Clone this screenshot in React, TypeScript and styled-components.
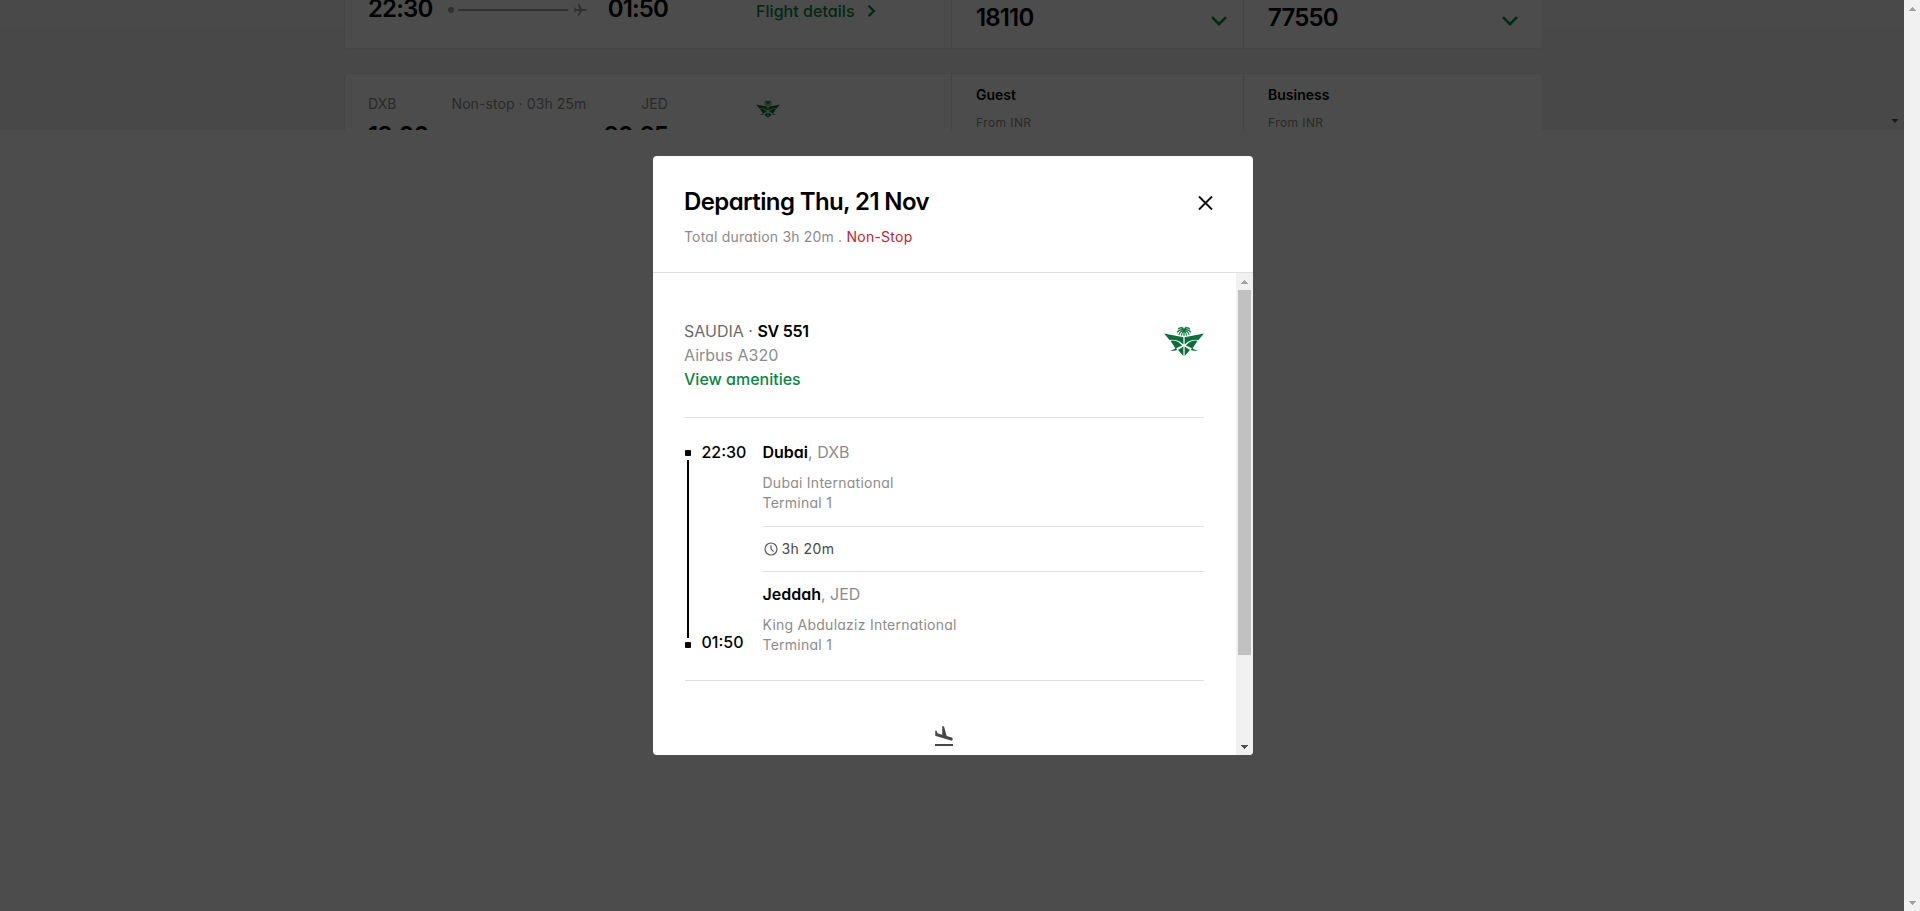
import React from "react";
import styled, { createGlobalStyle } from "styled-components";

const GlobalStyle = createGlobalStyle`
  * { box-sizing: border-box; }
  body {
    margin: 0;
    overflow: hidden;
    font-family: Inter, "Liberation Sans", sans-serif;
    font-feature-settings: "cv11";
    color: #000;
  }
`;

const Screen = styled.div`
  display: flex;
  width: 1920px;
  height: 911px;
  background: #fff;
`;

const Viewport = styled.main`
  position: relative;
  flex: 1;
`;

const Results = styled.section`
  position: relative;
  height: 130px;
  padding: 0 361px 0 344px;
  overflow: hidden;
  background: linear-gradient(#f4f4f4 0 28px, #f0f0f0 28px);
`;

const FlightCard = styled.article<{ $continued?: boolean }>`
  display: flex;
  height: ${(p) => (p.$continued ? 49 : 140)}px;
  margin-bottom: 24px;
  border: 1px solid #e6e6e6;
  border-top-width: ${(p) => (p.$continued ? 0 : 1)}px;
  border-radius: ${(p) => (p.$continued ? "0 0 4px 4px" : "4px")};
  background: #fff;
`;

const Journey = styled.div`
  display: flex;
  align-items: flex-start;
  gap: 88px;
  width: 606px;
  padding-left: 23px;
`;

const Trip = styled.div<{ $top: number }>`
  width: 300px;
  margin-top: ${(p) => p.$top}px;
`;

const Spread = styled.div<{ $top?: number }>`
  display: flex;
  justify-content: space-between;
  align-items: center;
  margin-top: ${(p) => p.$top ?? 0}px;
`;

const BigFigure = styled.span`
  font-size: 24px;
  line-height: 30px;
  font-weight: 600;
  letter-spacing: -0.85px;
`;

const Caption = styled.span`
  font-size: 14px;
  line-height: 20px;
  letter-spacing: 0.08px;
  color: #8c8c8c;
`;

const Route = styled.svg`
  display: block;
  margin-left: -4px;
`;

const CarrierSlot = styled.div`
  padding-top: 26px;
`;

const DetailsLink = styled.a`
  display: flex;
  align-items: center;
  gap: 12px;
  margin-top: -1px;
  font-size: 16px;
  line-height: 24px;
  font-weight: 500;
  letter-spacing: 0.05px;
  color: #078643;
`;

const Fare = styled.div<{ $width: number; $end: number }>`
  width: ${(p) => p.$width}px;
  padding: 0 ${(p) => p.$end}px 0 24px;
  border-left: 1px solid #e6e6e6;
`;

const FarePrice = styled.div`
  display: flex;
  justify-content: space-between;
  align-items: flex-start;
  padding-top: 3px;
  svg { margin-top: 13px; }
`;

const FareName = styled.div`
  padding-top: 11px;
  font-size: 14px;
  line-height: 20px;
  font-weight: 600;
`;

const FareNote = styled.div`
  margin-top: 10px;
  font-size: 12px;
  line-height: 16px;
  letter-spacing: 0.42px;
  color: #8c8c8c;
`;

const ListArrow = styled.svg`
  position: absolute;
  right: 5px;
  top: 119px;
`;

const Backdrop = styled.div`
  position: absolute;
  inset: 0;
  display: flex;
  align-items: center;
  justify-content: center;
  background: rgba(0, 0, 0, 0.7);
`;

const Dialog = styled.div`
  display: flex;
  flex-direction: column;
  width: 600px;
  height: 599px;
  margin-left: 1px;
  border-radius: 4px;
  overflow: hidden;
  background: #fff;
`;

const DialogHeader = styled.header`
  display: flex;
  justify-content: space-between;
  height: 117px;
  padding: 30px 39px 0 31.5px;
  border-bottom: 1px solid #dfdfdf;
  svg { margin-top: 9px; }
`;

const Title = styled.h1`
  margin: 0;
  font-size: 24px;
  line-height: 32px;
  font-weight: 600;
  letter-spacing: -0.62px;
`;

const Duration = styled.p`
  margin: 9px 0 0;
  font-size: 14px;
  line-height: 20px;
  letter-spacing: 0.18px;
  color: #8c8c8c;
`;

const Stops = styled.span`
  letter-spacing: 0.25px;
  color: #c3242c;
`;

const DialogBody = styled.div`
  display: flex;
  flex: 1;
  min-height: 0;
`;

const Content = styled.div`
  flex: 1;
  padding: 46px 32px 0;
`;

const Aircraft = styled.div`
  display: flex;
  justify-content: space-between;
  height: 99px;
  border-bottom: 1px solid #e0e0e0;
  svg { margin-top: 7px; }
`;

const Details = styled.div`
  margin-left: -0.5px;
`;

const Line = styled.div<{ $color: string; $weight?: number }>`
  font-size: 16px;
  line-height: 24px;
  color: ${(p) => p.$color};
  font-weight: ${(p) => p.$weight ?? 400};
`;

const Strong = styled.span<{ $spacing?: number }>`
  color: #000;
  font-weight: 600;
  letter-spacing: ${(p) => p.$spacing ?? 0}px;
`;

const Itinerary = styled.div`
  display: flex;
  height: 263px;
  padding-top: 22px;
  border-bottom: 1px solid #e0e0e0;
`;

const Rail = styled.div`
  display: flex;
  flex-direction: column;
  align-items: center;
  width: 6px;
  height: 208px;
  padding-top: 10px;
`;

const Stop = styled.i`
  width: 6px;
  height: 6px;
  border-radius: 1px;
  background: #000;
`;

const Track = styled.i`
  flex: 1;
  width: 2px;
  margin: 4px 0;
  background: #000;
`;

const Times = styled.div`
  display: flex;
  flex-direction: column;
  justify-content: space-between;
  width: 72px;
  height: 214px;
  padding-left: 11px;
  font-size: 16px;
  line-height: 24px;
  font-weight: 500;
`;

const Places = styled.div`
  flex: 1;
`;

const Airport = styled.div<{ $top?: number }>`
  margin-top: ${(p) => p.$top ?? 0}px;
  font-size: 14px;
  line-height: 20px;
  letter-spacing: 0.25px;
  color: #8c8c8c;
`;

const Elapsed = styled.div`
  display: flex;
  align-items: center;
  gap: 4px;
  height: 46px;
  margin: 13px 0 10px;
  padding: 0 0 2px 1px;
  border: solid #e0e0e0;
  border-width: 1px 0;
  font-size: 14px;
  letter-spacing: 0.4px;
  color: #484848;
  svg { margin-top: 2px; }
`;

const Arrival = styled.div`
  display: flex;
  justify-content: center;
  padding-top: 45px;
`;

const Scrollbar = styled.div`
  display: flex;
  flex-direction: column;
  align-items: center;
  justify-content: space-between;
  width: 17px;
  background: #f1f1f1;
`;

const Thumb = styled.div`
  width: 13px;
  height: 365px;
  margin-bottom: auto;
  background: #c1c1c1;
`;

const ArrowButton = styled.div`
  display: flex;
  align-items: center;
  justify-content: center;
  width: 17px;
  height: 17px;
`;

const ArrowShape = ({ up, color }: { up?: boolean; color: string }) => (
  <svg width="7" height="4" viewBox="0 0 7 4" shapeRendering="crispEdges">
    <path fill={color} d={up ? "M3 0h1v1h1v1h1v1h1v1H0V3h1V2h1V1h1z" : "M0 0h7v1H6v1H5v1H4v1H3V3H2V2H1V1H0z"} />
  </svg>
);

const Emblem = ({ width, height }: { width: number; height: number }) => (
  <svg width={width} height={height} viewBox="0 0 40 30" preserveAspectRatio="none">
    <g fill="#0a6f3b">
      <path d="M0 7.4 19.4 11.2V18.6L15.6 15.6Q11.5 13 5.6 14Z" />
      <path d="M40 7.4 20.6 11.2V18.6L24.4 15.6Q28.5 13 34.4 14Z" />
      <path d="M6.4 14.8Q11.6 14 15 16.6L18.2 19.4 11.6 22.6Z" />
      <path d="M33.6 14.8Q28.4 14 25 16.6L21.8 19.4 28.4 22.6Z" />
      <path d="M19.4 20.4V30L14 24Z" />
      <path d="M20.6 20.4V30L26 24Z" />
      <path d="M6.2 25 9.6 23.6 11.6 22 13.2 23.2 12 24.6Z" />
      <path d="M33.8 25 30.4 23.6 28.4 22 26.8 23.2 28 24.6Z" />
    </g>
    <path
      fill="none"
      stroke="#0a6f3b"
      strokeWidth="1.15"
      d="M20 10V3.5M20 4Q17 .2 14.2 3M20 4Q23 .2 25.8 3M20 4Q15.5 2.4 13 6.4M20 4Q24.5 2.4 27 6.4M20 4.2Q16 4.6 14.8 8.8M20 4.2Q24 4.6 25.2 8.8M20 4.4Q17.6 6 17.4 9.6M20 4.4Q22.4 6 22.6 9.6M20 4.5Q19 1.4 17.6 1M20 4.5Q21 1.4 22.4 1"
    />
  </svg>
);

const Chevron = () => (
  <svg width="16" height="10" viewBox="0 0 16 10" fill="none" stroke="#078643" strokeWidth="2.5">
    <path d="M1 1.2 8 8.2 15 1.2" />
  </svg>
);

const fares = [
  { name: "Guest", price: "18110", width: 292, end: 16 },
  { name: "Business", price: "77550", width: 299, end: 24 },
];

export default function App() {
  return (
    <Screen>
      <GlobalStyle />
      <Viewport>
        <Results>
          <FlightCard $continued>
            <Journey>
              <Trip $top={-6}>
                <Spread>
                  <BigFigure>22:30</BigFigure>
                  <Route width="140" height="14" viewBox="0 0 140 14">
                    <circle cx="3" cy="8" r="3" fill="#a0a0a0" />
                    <path d="M10 8H120" stroke="#a0a0a0" strokeWidth="2" />
                    <path
                      d="M139 8q0-1-1.3-1h-3.5L131 2h-1.3l1.6 5h-3.2l-1-1.4H126l.7 2.4-.7 2.4h1.1l1-1.4h3.2l-1.6 5h1.3l3.2-5h3.5q1.3 0 1.3-1z"
                      fill="#a0a0a0"
                    />
                  </Route>
                  <BigFigure>01:50</BigFigure>
                </Spread>
              </Trip>
              <DetailsLink>
                Flight details
                <svg width="9" height="12" viewBox="0 0 9 12" fill="none" stroke="#078643" strokeWidth="2.3">
                  <path d="M1.5 .8 6.8 6 1.5 11.2" />
                </svg>
              </DetailsLink>
            </Journey>
            {fares.map((fare) => (
              <Fare key={fare.name} $width={fare.width} $end={fare.end}>
                <FarePrice>
                  <BigFigure>{fare.price}</BigFigure>
                  <Chevron />
                </FarePrice>
              </Fare>
            ))}
          </FlightCard>
          <FlightCard>
            <Journey>
              <Trip $top={20}>
                <Spread>
                  <Caption>DXB</Caption>
                  <Caption>Non-stop · 03h 25m</Caption>
                  <Caption>JED</Caption>
                </Spread>
                <Spread $top={7}>
                  <BigFigure>18:00</BigFigure>
                  <BigFigure>20:25</BigFigure>
                </Spread>
              </Trip>
              <CarrierSlot>
                <Emblem width={24} height={18} />
              </CarrierSlot>
            </Journey>
            {fares.map((fare) => (
              <Fare key={fare.name} $width={fare.width} $end={fare.end}>
                <FareName>{fare.name}</FareName>
                <FareNote>From INR</FareNote>
              </Fare>
            ))}
          </FlightCard>
          <ListArrow width="8" height="4" viewBox="0 0 7 4">
            <path fill="#505050" d="M0 0h7L3.5 4z" />
          </ListArrow>
        </Results>
        <Backdrop>
          <Dialog role="dialog">
            <DialogHeader>
              <div>
                <Title>Departing Thu, 21 Nov</Title>
                <Duration>
                  Total duration 3h 20m . <Stops>Non-Stop</Stops>
                </Duration>
              </div>
              <svg width="17" height="16" viewBox="0 0 17 16" fill="none" stroke="#111" strokeWidth="1.9">
                <path d="M2 1.5 15 14.5M15 1.5 2 14.5" />
              </svg>
            </DialogHeader>
            <DialogBody>
              <Content>
                <Aircraft>
                  <Details>
                    <Line $color="#6b6b6b">
                      SAUDIA · <Strong $spacing={-0.25}>SV 551</Strong>
                    </Line>
                    <Line $color="#8c8c8c">Airbus A320</Line>
                    <Line $color="#078643" $weight={500}>View amenities</Line>
                  </Details>
                  <Emblem width={40} height={30} />
                </Aircraft>
                <Itinerary>
                  <Rail>
                    <Stop />
                    <Track />
                    <Stop />
                  </Rail>
                  <Times>
                    <span>22:30</span>
                    <span>01:50</span>
                  </Times>
                  <Places>
                    <Line $color="#8c8c8c"><Strong>Dubai</Strong>, DXB</Line>
                    <Airport $top={9}>Dubai International</Airport>
                    <Airport>Terminal 1</Airport>
                    <Elapsed>
                      <svg width="14" height="14" viewBox="0 0 14 14" fill="none" stroke="#5c5c5c" strokeWidth="1.2">
                        <circle cx="7" cy="7" r="6" />
                        <path d="M7 3.2V7L9.6 9.6" />
                      </svg>
                      3h 20m
                    </Elapsed>
                    <Line $color="#8c8c8c"><Strong>Jeddah</Strong>, JED</Line>
                    <Airport $top={9}>King Abdulaziz International</Airport>
                    <Airport>Terminal 1</Airport>
                  </Places>
                </Itinerary>
                <Arrival>
                  <svg width="18" height="20" viewBox="2.5 2 19 19" preserveAspectRatio="none" fill="#484848">
                    <path d="M2.5 19h19v2h-19v-2zm7.18-5.73l4.35 1.16 5.31 1.42c.8.21 1.62-.26 1.84-1.06.21-.8-.26-1.62-1.06-1.84l-5.31-1.42-2.76-9.02L10.12 2v8.28L5.15 8.95l-.93-2.32-1.45-.39v5.17l1.6.43 5.31 1.43z" />
                  </svg>
                </Arrival>
              </Content>
              <Scrollbar>
                <ArrowButton><ArrowShape up color="#a3a3a3" /></ArrowButton>
                <Thumb />
                <ArrowButton><ArrowShape color="#505050" /></ArrowButton>
              </Scrollbar>
            </DialogBody>
          </Dialog>
        </Backdrop>
      </Viewport>
      <Scrollbar>
        <ArrowButton><ArrowShape up color="#a3a3a3" /></ArrowButton>
        <ArrowButton><ArrowShape color="#a3a3a3" /></ArrowButton>
      </Scrollbar>
    </Screen>
  );
}
